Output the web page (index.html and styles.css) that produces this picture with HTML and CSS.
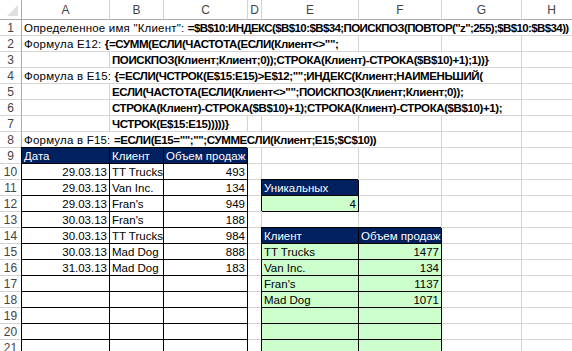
FILE: index.html
```html
<!DOCTYPE html>
<html lang="ru">
<head>
<meta charset="utf-8">
<title>Excel</title>
<link rel="stylesheet" href="styles.css">
</head>
<body>
<div class="sheet">
  <div class="corner"><span class="tri"></span></div>
  <div class="h">A</div><div class="h">B</div><div class="h">C</div><div class="h">D</div><div class="h">E</div><div class="h">F</div><div class="h">G</div><div class="h">H</div>

  <div class="r">1</div>
  <div class="c f s8">Определенное имя "Клиент": <b class="t">=$B$10:ИНДЕКС($B$10:$B$34;ПОИСКПОЗ(ПОВТОР("z";255);$B$10:$B$34))</b></div>

  <div class="r">2</div>
  <div class="c f s5">Формула E12: <b>{=СУММ(ЕСЛИ(ЧАСТОТА(ЕСЛИ(Клиент&lt;&gt;"";</b></div>
  <div class="c"></div><div class="c"></div><div class="c"></div>

  <div class="r">3</div>
  <div class="c"></div>
  <div class="c f s6"><b>ПОИСКПОЗ(Клиент;Клиент;0));СТРОКА(Клиент)-СТРОКА($B$10)+1);1))}</b></div>
  <div class="c"></div>

  <div class="r">4</div>
  <div class="c f s7">Формула в E15: <b>{=ЕСЛИ(ЧСТРОК(E$15:E15)&gt;E$12;"";ИНДЕКС(Клиент;НАИМЕНЬШИЙ(</b></div>
  <div class="c"></div>

  <div class="r">5</div>
  <div class="c"></div>
  <div class="c f s6"><b>ЕСЛИ(ЧАСТОТА(ЕСЛИ(Клиент&lt;&gt;"";ПОИСКПОЗ(Клиент;Клиент;0));</b></div>
  <div class="c"></div>

  <div class="r">6</div>
  <div class="c"></div>
  <div class="c f s6"><b>СТРОКА(Клиент)-СТРОКА($B$10)+1);СТРОКА(Клиент)-СТРОКА($B$10)+1);</b></div>
  <div class="c"></div>

  <div class="r">7</div>
  <div class="c"></div>
  <div class="c f s2"><b>ЧСТРОК(E$15:E15)))))}</b></div>
  <div class="c"></div><div class="c"></div><div class="c"></div><div class="c"></div><div class="c"></div>

  <div class="r">8</div>
  <div class="c f s6">Формула в F15: <b>=ЕСЛИ(E15="";"";СУММЕСЛИ(Клиент;E15;$C$10))</b></div>
  <div class="c"></div><div class="c"></div>

  <div class="r">9</div>
  <div class="c bx nv">Дата</div><div class="c bx nv">Клиент</div><div class="c bx nv">Объем продаж</div>
  <div class="c"></div><div class="c"></div><div class="c"></div><div class="c"></div><div class="c"></div>

  <div class="r">10</div>
  <div class="c bx n">29.03.13</div><div class="c bx">TT Trucks</div><div class="c bx n">493</div>
  <div class="c"></div><div class="c"></div><div class="c"></div><div class="c"></div><div class="c"></div>

  <div class="r">11</div>
  <div class="c bx n">29.03.13</div><div class="c bx">Van Inc.</div><div class="c bx n">134</div>
  <div class="c"></div><div class="c bx nv">Уникальных</div><div class="c"></div><div class="c"></div><div class="c"></div>

  <div class="r">12</div>
  <div class="c bx n">29.03.13</div><div class="c bx">Fran's</div><div class="c bx n">949</div>
  <div class="c"></div><div class="c bx gr n">4</div><div class="c"></div><div class="c"></div><div class="c"></div>

  <div class="r">13</div>
  <div class="c bx n">30.03.13</div><div class="c bx">Fran's</div><div class="c bx n">188</div>
  <div class="c"></div><div class="c"></div><div class="c"></div><div class="c"></div><div class="c"></div>

  <div class="r">14</div>
  <div class="c bx n">30.03.13</div><div class="c bx">TT Trucks</div><div class="c bx n">984</div>
  <div class="c"></div><div class="c bx nv">Клиент</div><div class="c bx nv">Объем продаж</div><div class="c"></div><div class="c"></div>

  <div class="r">15</div>
  <div class="c bx n">30.03.13</div><div class="c bx">Mad Dog</div><div class="c bx n">888</div>
  <div class="c"></div><div class="c bx gr">TT Trucks</div><div class="c bx gr n">1477</div><div class="c"></div><div class="c"></div>

  <div class="r">16</div>
  <div class="c bx n">31.03.13</div><div class="c bx">Mad Dog</div><div class="c bx n">183</div>
  <div class="c"></div><div class="c bx gr">Van Inc.</div><div class="c bx gr n">134</div><div class="c"></div><div class="c"></div>

  <div class="r">17</div>
  <div class="c bx"></div><div class="c bx"></div><div class="c bx"></div>
  <div class="c"></div><div class="c bx gr">Fran's</div><div class="c bx gr n">1137</div><div class="c"></div><div class="c"></div>

  <div class="r">18</div>
  <div class="c bx"></div><div class="c bx"></div><div class="c bx"></div>
  <div class="c"></div><div class="c bx gr">Mad Dog</div><div class="c bx gr n">1071</div><div class="c"></div><div class="c"></div>

  <div class="r">19</div>
  <div class="c bx"></div><div class="c bx"></div><div class="c bx"></div>
  <div class="c"></div><div class="c bx gr"></div><div class="c bx gr"></div><div class="c"></div><div class="c"></div>

  <div class="r">20</div>
  <div class="c bx"></div><div class="c bx"></div><div class="c bx"></div>
  <div class="c"></div><div class="c bx gr"></div><div class="c bx gr"></div><div class="c"></div><div class="c"></div>

  <div class="r">21</div>
  <div class="c bx"></div><div class="c bx"></div><div class="c bx"></div>
  <div class="c"></div><div class="c bx gr"></div><div class="c bx gr"></div><div class="c"></div><div class="c"></div>
</div>
</body>
</html>
```

FILE: styles.css
```css
html, body {
  margin: 0;
  padding: 0;
  background: #fff;
  overflow: hidden;
}

.sheet {
  display: grid;
  grid-template-columns: 22px 88px 54px 84px 14px 97px 83px 80px 60px;
  grid-template-rows: 20px;
  grid-auto-rows: 16px;
  width: 582px;
  font-family: "Liberation Sans", Arial, sans-serif;
  font-size: 11.5px;
  color: #000;
}

.sheet > div {
  box-sizing: border-box;
  white-space: nowrap;
  overflow: hidden;
}

.corner {
  position: relative;
  border-right: 1px solid #ababab;
  border-bottom: 1px solid #ababab;
  background: #fff;
}

.tri {
  position: absolute;
  right: 3px;
  bottom: 3px;
  width: 0;
  height: 0;
  border-left: 11px solid transparent;
  border-bottom: 11px solid #dfdfdf;
}

.h {
  border-right: 1px solid #d4d4d4;
  border-bottom: 1px solid #ababab;
  text-align: center;
  line-height: 21px;
  font-size: 12px;
  color: #444;
  background: #fff;
}

.r {
  border-right: 1px solid #ababab;
  border-bottom: 1px solid #d4d4d4;
  text-align: center;
  line-height: 16px;
  font-size: 12px;
  color: #444;
  background: #fff;
}

.c {
  border-right: 1px solid #d4d4d4;
  border-bottom: 1px solid #d4d4d4;
  padding: 0 2px;
  line-height: 16px;
}

.f {
  letter-spacing: 0.2px;
}

.c b {
  font-weight: bold;
  letter-spacing: -0.4px;
}

.c b.t {
  letter-spacing: -0.6px;
}

.s2 { grid-column: span 2; }
.s5 { grid-column: span 5; }
.s6 { grid-column: span 6; }
.s7 { grid-column: span 7; }
.s8 { grid-column: span 8; }

.bx {
  border-right-color: #000;
  border-bottom-color: #000;
  box-shadow: -1px -1px 0 #000;
}

.n { text-align: right; }

.nv {
  background: #002060;
  color: #fff;
}

.gr {
  background: #ccffcc;
}
```
